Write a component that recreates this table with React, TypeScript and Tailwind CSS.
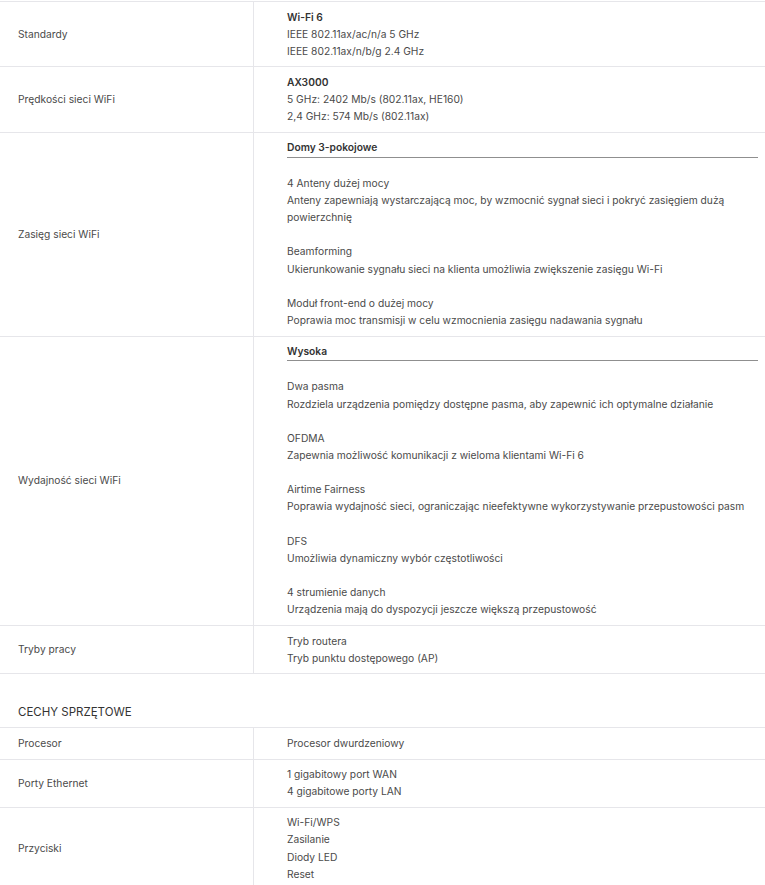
import type { ReactNode } from "react";

type Group = { title: string; text: string };

function Row({ label, children }: { label: string; children: ReactNode }) {
  return (
    <div className="flex border-b border-[#e6e6ea]">
      <div className="flex w-[254px] shrink-0 items-center border-r border-[#e6e6ea] pl-[18px]">
        {label}
      </div>
      <div className="flex-1 py-[6.5px] pl-[33px] pr-[7px]">{children}</div>
    </div>
  );
}

function Feature({ heading, groups }: { heading: string; groups: Group[] }) {
  return (
    <div>
      <p className="border-b border-[#8f8f8f] font-semibold text-[#333]">{heading}</p>
      {groups.map((g) => (
        <div key={g.title} className="mt-[17.15px]">
          <p>{g.title}</p>
          <p>{g.text}</p>
        </div>
      ))}
    </div>
  );
}

const range: Group[] = [
  {
    title: "4 Anteny dużej mocy",
    text: "Anteny zapewniają wystarczającą moc, by wzmocnić sygnał sieci i pokryć zasięgiem dużą powierzchnię",
  },
  {
    title: "Beamforming",
    text: "Ukierunkowanie sygnału sieci na klienta umożliwia zwiększenie zasięgu Wi-Fi",
  },
  {
    title: "Moduł front-end o dużej mocy",
    text: "Poprawia moc transmisji w celu wzmocnienia zasięgu nadawania sygnału",
  },
];

const perf: Group[] = [
  {
    title: "Dwa pasma",
    text: "Rozdziela urządzenia pomiędzy dostępne pasma, aby zapewnić ich optymalne działanie",
  },
  { title: "OFDMA", text: "Zapewnia możliwość komunikacji z wieloma klientami Wi-Fi 6" },
  {
    title: "Airtime Fairness",
    text: "Poprawia wydajność sieci, ograniczając nieefektywne wykorzystywanie przepustowości pasm",
  },
  { title: "DFS", text: "Umożliwia dynamiczny wybór częstotliwości" },
  {
    title: "4 strumienie danych",
    text: "Urządzenia mają do dyspozycji jeszcze większą przepustowość",
  },
];

export default function App() {
  return (
    <div className="min-h-[885px] bg-white pt-px font-['Inter','Liberation_Sans',sans-serif] text-[10.25px] leading-[17.15px] text-[#4a4a4a]">
      <div className="border-t border-[#e6e6ea]">
        <Row label="Standardy">
          <p className="font-semibold text-[#333]">Wi-Fi 6</p>
          <p>IEEE 802.11ax/ac/n/a 5 GHz</p>
          <p>IEEE 802.11ax/n/b/g 2.4 GHz</p>
        </Row>
        <Row label="Prędkości sieci WiFi">
          <p className="font-semibold text-[#333]">AX3000</p>
          <p>5 GHz: 2402 Mb/s (802.11ax, HE160)</p>
          <p>2,4 GHz: 574 Mb/s (802.11ax)</p>
        </Row>
        <Row label="Zasięg sieci WiFi">
          <Feature heading="Domy 3-pokojowe" groups={range} />
        </Row>
        <Row label="Wydajność sieci WiFi">
          <Feature heading="Wysoka" groups={perf} />
        </Row>
        <Row label="Tryby pracy">
          <p>Tryb routera</p>
          <p>Tryb punktu dostępowego (AP)</p>
        </Row>
      </div>

      <h2 className="border-b border-[#e6e6ea] pb-[5px] pl-[18px] pt-[28px] text-[11.5px] leading-[20px] text-[#333]">
        CECHY SPRZĘTOWE
      </h2>
      <Row label="Procesor">
        <p>Procesor dwurdzeniowy</p>
      </Row>
      <Row label="Porty Ethernet">
        <p>1 gigabitowy port WAN</p>
        <p>4 gigabitowe porty LAN</p>
      </Row>
      <Row label="Przyciski">
        <p>Wi-Fi/WPS</p>
        <p>Zasilanie</p>
        <p>Diody LED</p>
        <p>Reset</p>
      </Row>
    </div>
  );
}
